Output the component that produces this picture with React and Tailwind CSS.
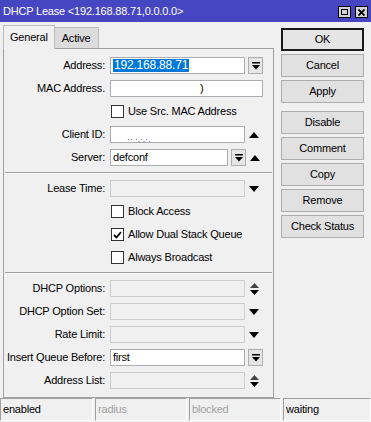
import React from 'react';

const DropBtn = () => (
  <div className="w-[15px] h-[17px] ml-[3px] border border-[#adadad] bg-[#e5e5e5] flex items-center justify-center">
    <svg width="8" height="8" viewBox="0 0 8 8">
      <rect x="0" y="0" width="8" height="1.5" fill="#000" />
      <path d="M0 3 L8 3 L4 7.5 Z" fill="#000" />
    </svg>
  </div>
);

const Arrow = ({ dir }) => (
  <div className="w-[18px] flex items-center justify-center">
    {dir === 'up' && (
      <svg width="10" height="6" viewBox="0 0 10 6"><path d="M0 6 L10 6 L5 0 Z" fill="#000" /></svg>
    )}
    {dir === 'down' && (
      <svg width="10" height="6" viewBox="0 0 10 6"><path d="M0 0 L10 0 L5 6 Z" fill="#000" /></svg>
    )}
    {dir === 'updown' && (
      <svg width="9" height="12" viewBox="0 0 9 12">
        <path d="M0 5 L9 5 L4.5 0 Z" fill="#444" />
        <path d="M0 7 L9 7 L4.5 12 Z" fill="#000" />
      </svg>
    )}
  </div>
);

const Row = ({ label, children }) => (
  <div className="h-[23px] flex items-center">
    <div className="w-[102px] text-right pr-[1px] whitespace-nowrap">{label}</div>
    <div className="ml-[4px] flex items-center">{children}</div>
  </div>
);

const Field = ({ w, disabled, children }) => (
  <div
    className={`h-[17px] border flex items-center px-[2px] overflow-hidden whitespace-nowrap ${
      disabled ? 'bg-[#f0f0f0] border-[#cccccc]' : 'bg-white border-[#abadb3]'
    }`}
    style={{ width: w }}
  >
    {children}
  </div>
);

const Check = ({ label, checked }) => (
  <div className="h-[23px] flex items-center pl-[107px]">
    <div className="w-[13px] h-[13px] border border-[#333] bg-white flex items-center justify-center">
      {checked && (
        <svg width="9" height="8" viewBox="0 0 9 8">
          <path d="M1 4 L3.5 6.5 L8 1" stroke="#000" strokeWidth="1.8" fill="none" />
        </svg>
      )}
    </div>
    <span className="ml-[4px]">{label}</span>
  </div>
);

const Sep = () => (
  <div className="mx-[1px] my-[3px] border-t border-[#a0a0a0] border-b-white border-b h-0" />
);

const Btn = ({ children, def }) => (
  <div
    className={`w-[83px] h-[23px] flex items-center justify-center bg-[#e1e1e1] ${
      def ? 'border-2 border-[#1a1a1a] bg-[#e5e5e5]' : 'border border-[#adadad]'
    }`}
  >
    {children}
  </div>
);

export default function App() {
  return (
    <div
      className="w-[371px] h-[422px] bg-[#f0f0f0] flex flex-col text-[11px] tracking-[-0.2px] text-black overflow-hidden"
      style={{ fontFamily: '"Liberation Sans", Arial, sans-serif' }}
    >
      <div className="h-[22px] bg-[#4646c3] flex items-center justify-between pl-[3px] pr-[3px]">
        <span className="text-white text-[11px]">DHCP Lease &lt;192.168.88.71,0.0.0.0&gt;</span>
        <div className="flex gap-[4px] mt-[2px]">
          <div className="w-[13px] h-[12px] bg-[#d4d4d4] border border-black flex items-center justify-center">
            <div className="w-[7px] h-[6px] border border-black" />
          </div>
          <div className="w-[13px] h-[12px] bg-[#d4d4d4] border border-black flex items-center justify-center">
            <svg width="7" height="7" viewBox="0 0 7 7">
              <path d="M0.5 0.5 L6.5 6.5 M6.5 0.5 L0.5 6.5" stroke="#000" strokeWidth="1.8" />
            </svg>
          </div>
        </div>
      </div>

      <div className="flex flex-1">
        <div className="w-[271px] ml-[3px] mt-[2px] flex flex-col">
          <div className="flex items-end h-[24px]">
            <div className="h-[24px] px-[6px] flex items-center bg-[#f0f0f0] border border-b-0 border-[#bcbcbc] relative top-[1px]">
              General
            </div>
            <div className="h-[21px] px-[7px] flex items-center bg-[#dcdcdc] border border-b-0 border-l-0 border-[#bcbcbc]">
              Active
            </div>
          </div>
          <div className="h-[350px] border border-[#a0a0a0] pt-[5px]">
            <Row label="Address:">
              <Field w="135px">
                <span className="bg-[#0078d7] text-white text-[12px] leading-[13px] px-[1px]">192.168.88.71</span>
              </Field>
              <DropBtn />
            </Row>
            <Row label="MAC Address.">
              <Field w="153px">
                <span className="ml-[87px]">)</span>
              </Field>
            </Row>
            <Check label="Use Src. MAC Address" />
            <Row label="Client ID:">
              <Field w="135px">
                <span className="ml-[14px] text-[#555] text-[9px] leading-[9px] translate-y-[5px]">·· ·.·.·.</span>
              </Field>
              <Arrow dir="up" />
            </Row>
            <Row label="Server:">
              <Field w="118px">defconf</Field>
              <DropBtn />
              <Arrow dir="up" />
            </Row>
            <Sep />
            <Row label="Lease Time:">
              <Field w="135px" disabled />
              <Arrow dir="down" />
            </Row>
            <Check label="Block Access" />
            <Check label="Allow Dual Stack Queue" checked />
            <Check label="Always Broadcast" />
            <Sep />
            <Row label="DHCP Options:">
              <Field w="135px" disabled />
              <Arrow dir="updown" />
            </Row>
            <Row label="DHCP Option Set:">
              <Field w="135px" disabled />
              <Arrow dir="down" />
            </Row>
            <Row label="Rate Limit:">
              <Field w="135px" disabled />
              <Arrow dir="down" />
            </Row>
            <Row label="Insert Queue Before:">
              <Field w="135px">first</Field>
              <DropBtn />
            </Row>
            <Row label="Address List:">
              <Field w="135px" disabled />
              <Arrow dir="updown" />
            </Row>
          </div>
        </div>

        <div className="ml-[7px] mt-[6px] flex flex-col gap-[3px]">
          <Btn def>OK</Btn>
          <Btn>Cancel</Btn>
          <Btn>Apply</Btn>
          <div className="h-[2px]" />
          <Btn>Disable</Btn>
          <Btn>Comment</Btn>
          <Btn>Copy</Btn>
          <Btn>Remove</Btn>
          <Btn>Check Status</Btn>
        </div>
      </div>

      <div className="h-[24px] flex gap-[2px] pb-[1px]">
        <div className="w-[93px] border border-[#a0a0a0] border-r-white border-b-white flex items-center px-[2px]">enabled</div>
        <div className="w-[92px] border border-[#a0a0a0] border-r-white border-b-white flex items-center px-[2px] text-[#a0a0a0]">radius</div>
        <div className="w-[92px] border border-[#a0a0a0] border-r-white border-b-white flex items-center px-[2px] text-[#a0a0a0]">blocked</div>
        <div className="flex-1 border border-[#a0a0a0] border-r-white border-b-white flex items-center px-[2px]">waiting</div>
      </div>
    </div>
  );
}
